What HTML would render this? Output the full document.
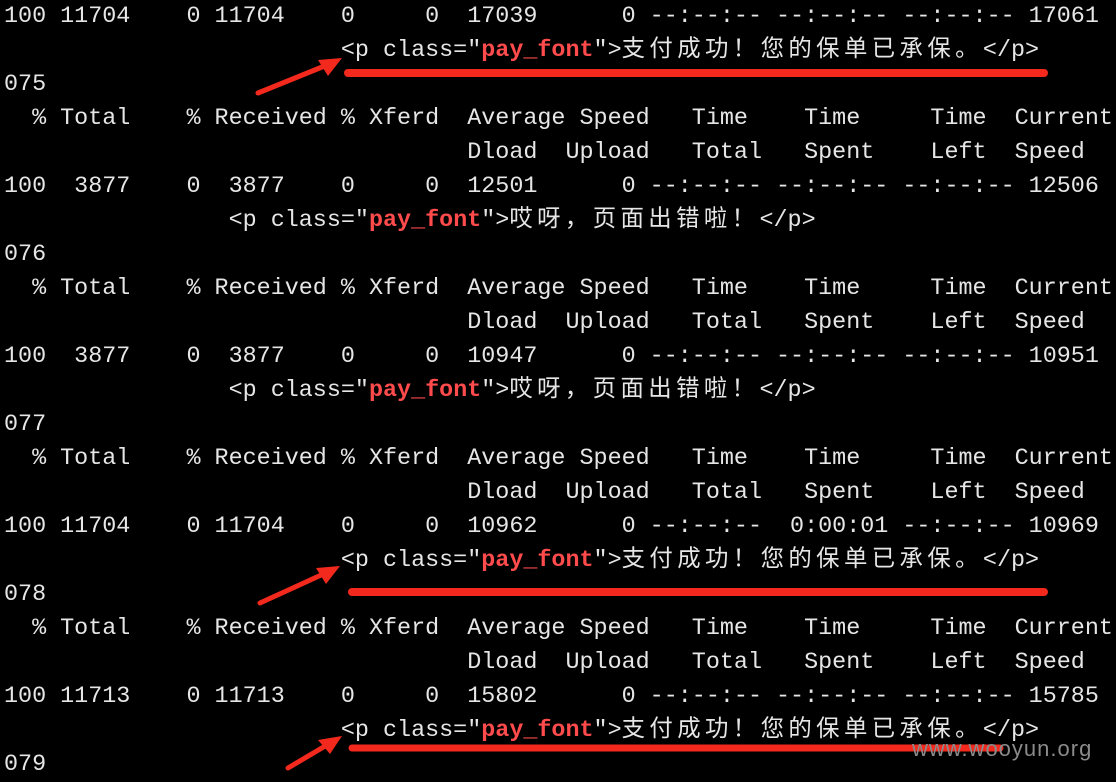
<!DOCTYPE html>
<html><head><meta charset="utf-8"><style>
html,body{margin:0;padding:0;background:#000;width:1116px;height:778px;overflow:hidden}
pre{position:absolute;left:4px;top:0px;margin:0;font-family:"Liberation Mono","Noto Sans CJK SC",monospace;font-size:23.4px;line-height:34px;color:#e6e6e6;letter-spacing:0}
.r{color:#ff4b4b;font-weight:bold}
.c{letter-spacing:4.4px}
svg{position:absolute;left:0;top:0}
.wm{position:absolute;left:912px;top:736px;font-family:"Liberation Sans",sans-serif;font-size:22px;color:#8a8a8a;letter-spacing:1px}
</style></head><body>
<pre>100 11704    0 11704    0     0  17039      0 --:--:-- --:--:-- --:--:-- 17061
                        &lt;p class="<span class="r">pay_font</span>"&gt;<span class="c">支付成功！您的保单已承保。</span>&lt;/p&gt;
075
  % Total    % Received % Xferd  Average Speed   Time    Time     Time  Current
                                 Dload  Upload   Total   Spent    Left  Speed
100  3877    0  3877    0     0  12501      0 --:--:-- --:--:-- --:--:-- 12506
                &lt;p class="<span class="r">pay_font</span>"&gt;<span class="c">哎呀，页面出错啦！</span>&lt;/p&gt;
076
  % Total    % Received % Xferd  Average Speed   Time    Time     Time  Current
                                 Dload  Upload   Total   Spent    Left  Speed
100  3877    0  3877    0     0  10947      0 --:--:-- --:--:-- --:--:-- 10951
                &lt;p class="<span class="r">pay_font</span>"&gt;<span class="c">哎呀，页面出错啦！</span>&lt;/p&gt;
077
  % Total    % Received % Xferd  Average Speed   Time    Time     Time  Current
                                 Dload  Upload   Total   Spent    Left  Speed
100 11704    0 11704    0     0  10962      0 --:--:--  0:00:01 --:--:-- 10969
                        &lt;p class="<span class="r">pay_font</span>"&gt;<span class="c">支付成功！您的保单已承保。</span>&lt;/p&gt;
078
  % Total    % Received % Xferd  Average Speed   Time    Time     Time  Current
                                 Dload  Upload   Total   Spent    Left  Speed
100 11713    0 11713    0     0  15802      0 --:--:-- --:--:-- --:--:-- 15785
                        &lt;p class="<span class="r">pay_font</span>"&gt;<span class="c">支付成功！您的保单已承保。</span>&lt;/p&gt;
079</pre>
<svg width="1116" height="778" viewBox="0 0 1116 778">
<g stroke="#f2291c" stroke-linecap="round" fill="none">
<line x1="348" y1="73" x2="1044" y2="73" stroke-width="8"/>
<line x1="352" y1="592" x2="1044" y2="592" stroke-width="8"/>
<line x1="352" y1="748" x2="1000" y2="748" stroke-width="7"/>
<line x1="258" y1="93" x2="332" y2="63" stroke-width="5"/>
<line x1="260" y1="603" x2="330" y2="571" stroke-width="5"/>
<line x1="288" y1="768" x2="332" y2="742" stroke-width="5"/>
</g>
<g fill="#f2291c">
<polygon points="342,58 318,60 328,76"/>
<polygon points="340,566 316,568 326,584"/>
<polygon points="342,736 318,740 330,754"/>
</g>
</svg>
<div class="wm">www.wooyun.org</div>
</body></html>
